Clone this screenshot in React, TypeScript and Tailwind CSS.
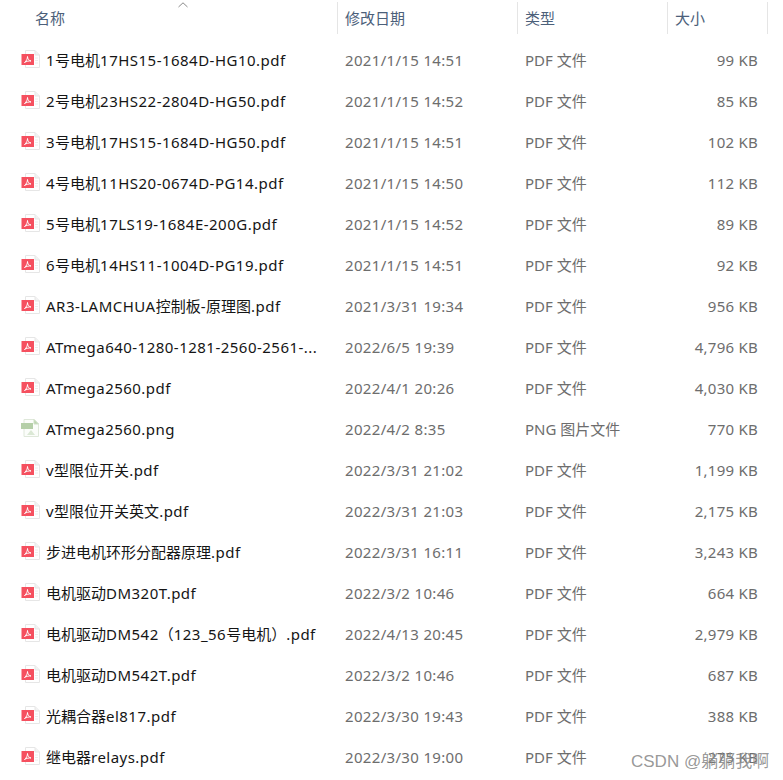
const pdf = "PDF 文件";
const rows: [string, string, string, string][] = [
  ["1号电机17HS15-1684D-HG10.pdf", "2021/1/15 14:51", pdf, "99 KB"],
  ["2号电机23HS22-2804D-HG50.pdf", "2021/1/15 14:52", pdf, "85 KB"],
  ["3号电机17HS15-1684D-HG50.pdf", "2021/1/15 14:51", pdf, "102 KB"],
  ["4号电机11HS20-0674D-PG14.pdf", "2021/1/15 14:50", pdf, "112 KB"],
  ["5号电机17LS19-1684E-200G.pdf", "2021/1/15 14:52", pdf, "89 KB"],
  ["6号电机14HS11-1004D-PG19.pdf", "2021/1/15 14:51", pdf, "92 KB"],
  ["AR3-LAMCHUA控制板-原理图.pdf", "2021/3/31 19:34", pdf, "956 KB"],
  ["ATmega640-1280-1281-2560-2561-...", "2022/6/5 19:39", pdf, "4,796 KB"],
  ["ATmega2560.pdf", "2022/4/1 20:26", pdf, "4,030 KB"],
  ["ATmega2560.png", "2022/4/2 8:35", "PNG 图片文件", "770 KB"],
  ["v型限位开关.pdf", "2022/3/31 21:02", pdf, "1,199 KB"],
  ["v型限位开关英文.pdf", "2022/3/31 21:03", pdf, "2,175 KB"],
  ["步进电机环形分配器原理.pdf", "2022/3/31 16:11", pdf, "3,243 KB"],
  ["电机驱动DM320T.pdf", "2022/3/2 10:46", pdf, "664 KB"],
  ["电机驱动DM542（123_56号电机）.pdf", "2022/4/13 20:45", pdf, "2,979 KB"],
  ["电机驱动DM542T.pdf", "2022/3/2 10:46", pdf, "687 KB"],
  ["光耦合器el817.pdf", "2022/3/30 19:43", pdf, "388 KB"],
  ["继电器relays.pdf", "2022/3/30 19:00", pdf, "275 KB"],
];

function Name({ text }: { text: string }) {
  const parts = text.match(/[\x00-\x7f]+|[^\x00-\x7f]+/g) ?? [];
  return (
    <span className="whitespace-nowrap text-[#151515]">
      {parts.map((p, i) =>
        p.charCodeAt(0) < 128 ? (
          <span key={i} className="tracking-[0.48px]">{p}</span>
        ) : (
          <span key={i}>{p}</span>
        )
      )}
    </span>
  );
}

function PdfIcon() {
  return (
    <svg width="21" height="20" viewBox="0 0 21 20" className="shrink-0">
      <path d="M5.5 1.5H15L19.5 6V18.5H5.5Z" fill="#fff" stroke="#e6e6e6" />
      <path d="M15 1.5V6H19.5" fill="#f2f2f2" stroke="#e6e6e6" />
      <path d="M15 9H18M15 11.5H18M15 14H18" stroke="#ececec" />
      <rect x="1.5" y="5" width="12.5" height="11" fill="#f5505f" />
      <path d="M4.5 13.5C6.5 12 7.5 9.5 7.5 7.5C7.5 10 9 11.5 11 12C9 11.8 6.5 12.2 4.5 13.5Z" fill="none" stroke="#fff" strokeWidth="1" />
    </svg>
  );
}

function PngIcon() {
  return (
    <svg width="21" height="20" viewBox="0 0 21 20" className="shrink-0">
      <path d="M4 1.5H14L18.5 6V18.5H4Z" fill="#fbfdfa" stroke="#dfe8da" />
      <path d="M14 1.5V6H18.5Z" fill="#bcd4b0" stroke="#cfe0c6" />
      <rect x="1" y="5" width="12" height="6" fill="#b5cfa8" />
      <path d="M7 17L11 12L15 17Z" fill="#dbe8d5" />
    </svg>
  );
}

export default function App() {
  return (
    <div className="relative h-[780px] w-[783px] overflow-hidden bg-white font-['Noto_Sans','Noto_Sans_CJK_SC',sans-serif] text-[15px]">
      <div className="flex h-[40px] w-[768px] items-start pt-[2px] text-[#4c607a]">
        <div className="relative flex h-[32px] w-[338px] items-center border-r border-[#e5e5e5] pl-[35px]">
          名称
          <svg width="10" height="6" viewBox="0 0 10 6" className="absolute left-[178px] top-[0px]">
            <path d="M0.5 5L5 0.8L9.5 5" fill="none" stroke="#8a8a8a" strokeWidth="1" />
          </svg>
        </div>
        <div className="flex h-[32px] w-[180px] items-center border-r border-[#e5e5e5] pl-[7px]">修改日期</div>
        <div className="flex h-[32px] w-[150px] items-center border-r border-[#e5e5e5] pl-[7px]">类型</div>
        <div className="flex h-[32px] w-[100px] items-center border-r border-[#e5e5e5] pl-[7px]">大小</div>
      </div>
      <div className="flex flex-col">
        {rows.map((r) => (
          <div key={r[0]} className="flex h-[41px] w-[768px] items-center">
            <div className="flex w-[338px] items-center pl-[20px]">
              <div className="w-[26px] -translate-y-[2px]">{r[0].endsWith(".png") ? <PngIcon /> : <PdfIcon />}</div>
              <Name text={r[0]} />
            </div>
            <div className="w-[180px] whitespace-nowrap pl-[7px] tracking-[0.33px] text-[#6d6d6d]">{r[1]}</div>
            <div className="w-[150px] whitespace-nowrap pl-[7px] text-[#6d6d6d]">{r[2]}</div>
            <div className="w-[90px] whitespace-nowrap text-right tracking-[0.25px] text-[#6d6d6d]">{r[3]}</div>
          </div>
        ))}
      </div>
      <div className="absolute left-[631px] top-[749px] whitespace-nowrap font-['Liberation_Sans','Noto_Sans_CJK_SC',sans-serif] text-[17px] text-[#8c8c8c]/90">CSDN @躺躺我啊</div>
    </div>
  );
}
